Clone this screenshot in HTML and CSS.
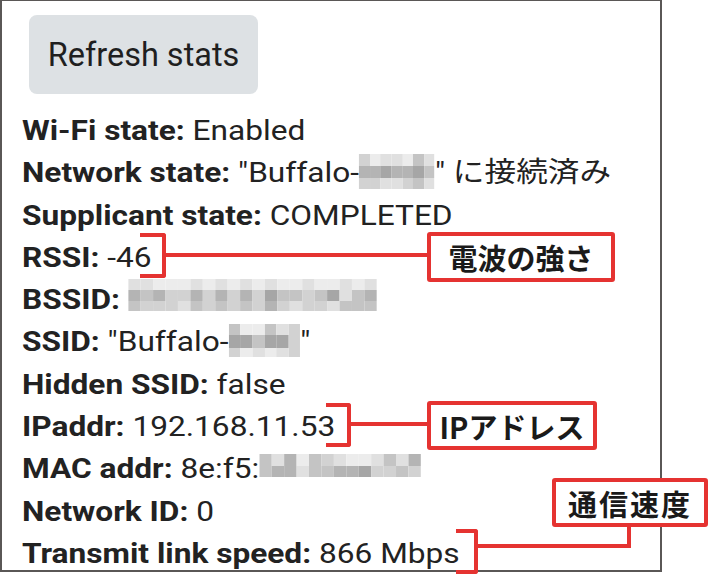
FILE: index.html
```html
<!DOCTYPE html>
<html lang="ja">
<head>
<meta charset="utf-8">
<title>Wi-Fi stats</title>
<link rel="stylesheet" href="styles.css">
</head>
<body>
<div class="page">
  <div class="frame">
    <button class="refresh">Refresh stats</button>
    <div class="stats">
      <div class="row"><b>Wi-Fi state:</b> Enabled</div>
      <div class="row"><b>Network state:</b> "Buffalo-<span class="mosaic m-net"><span class="cells"><i class="c"></i><i class="a"></i><i class="b"></i><i class="b"></i><i class="a"></i><i class="d"></i><i class="b"></i><i class="e"></i><i class="e"></i><i class="f"></i><i class="e"></i><i class="e"></i><i class="f"></i><i class="d"></i><i class="c"></i><i class="c"></i><i class="b"></i><i class="b"></i><i class="c"></i><i class="d"></i><i class="b"></i></span></span>" に接続済み</div>
      <div class="row"><b>Supplicant state:</b> COMPLETED</div>
      <div class="row"><b>RSSI:</b> -46</div>
      <div class="row"><b>BSSID:</b> <span class="mosaic m-bssid"><span class="cells"><i class="b"></i><i class="b"></i><i class="a"></i><i class="a"></i><i class="a"></i><i class="b"></i><i class="a"></i><i class="b"></i><i class="a"></i><i class="b"></i><i class="a"></i><i class="b"></i><i class="a"></i><i class="a"></i><i class="b"></i><i class="a"></i><i class="a"></i><i class="b"></i><i class="a"></i><i class="b"></i><i class="e"></i><i class="d"></i><i class="e"></i><i class="c"></i><i class="c"></i><i class="e"></i><i class="c"></i><i class="e"></i><i class="c"></i><i class="e"></i><i class="c"></i><i class="f"></i><i class="d"></i><i class="d"></i><i class="c"></i><i class="d"></i><i class="f"></i><i class="b"></i><i class="d"></i><i class="e"></i><i class="d"></i><i class="c"></i><i class="c"></i><i class="c"></i><i class="b"></i><i class="d"></i><i class="c"></i><i class="d"></i><i class="c"></i><i class="d"></i><i class="c"></i><i class="e"></i><i class="c"></i><i class="b"></i><i class="c"></i><i class="c"></i><i class="b"></i><i class="d"></i><i class="d"></i><i class="d"></i></span></span></div>
      <div class="row"><b>SSID:</b> "Buffalo-<span class="mosaic m-ssid"><span class="cells"><i class="d"></i><i class="a"></i><i class="a"></i><i class="d"></i><i class="b"></i><i class="c"></i><i class="f"></i><i class="f"></i><i class="d"></i><i class="f"></i><i class="f"></i><i class="c"></i><i class="c"></i><i class="a"></i><i class="b"></i><i class="a"></i><i class="b"></i><i class="c"></i></span></span>"</div>
      <div class="row"><b>Hidden SSID:</b> false</div>
      <div class="row"><b>IPaddr:</b> 192.168.11.53</div>
      <div class="row"><b>MAC addr:</b> 8e:f5:<span class="mosaic m-mac"><span class="cells"><i class="d"></i><i class="b"></i><i class="e"></i><i class="a"></i><i class="d"></i><i class="c"></i><i class="b"></i><i class="a"></i><i class="a"></i><i class="b"></i><i class="d"></i><i class="b"></i><i class="e"></i><i class="d"></i><i class="e"></i><i class="e"></i><i class="b"></i><i class="d"></i><i class="d"></i><i class="e"></i><i class="e"></i><i class="f"></i><i class="c"></i><i class="c"></i><i class="d"></i><i class="c"></i></span></span></div>
      <div class="row"><b>Network ID:</b> 0</div>
      <div class="row"><b>Transmit link speed:</b> 866 Mbps</div>
    </div>
  </div>

  <div class="bracket br-rssi"></div>
  <div class="hline ln-rssi"></div>
  <div class="label lb-rssi">電波の強さ</div>

  <div class="bracket br-ip"></div>
  <div class="hline ln-ip"></div>
  <div class="label lb-ip">IPアドレス</div>

  <div class="bracket br-speed"></div>
  <div class="hline ln-speed"></div>
  <div class="vline vl-speed"></div>
  <div class="label lb-speed">通信速度</div>
</div>
</body>
</html>
```

FILE: styles.css
```css
* { box-sizing: border-box; }

html, body {
  margin: 0;
  padding: 0;
  background: #ffffff;
}

.page {
  position: relative;
  width: 711px;
  height: 576px;
  overflow: hidden;
  font-family: Roboto, "Noto Sans CJK JP", sans-serif;
  color: #222222;
}

.frame {
  width: 662px;
  height: 572px;
  border: 2px solid #5a5756;
  border-top-width: 1px;
  padding: 14px 0 0 20px;
}

.refresh {
  display: block;
  margin: 0 0 0 7px;
  width: 229px;
  height: 79px;
  border: none;
  border-radius: 8px;
  background: #dde1e4;
  font-family: Roboto, sans-serif;
  font-size: 32.5px;
  color: #1f1f1f;
  padding: 0;
}

.stats {
  margin-top: 16px;
  transform: scaleX(1.13);
  transform-origin: 0 0;
}

.row {
  font-size: 28px;
  line-height: 42.3px;
  height: 42.3px;
  white-space: nowrap;
}

.row b {
  font-weight: 700;
}

.mosaic {
  display: inline-block;
  overflow: hidden;
  line-height: 0;
}

.cells {
  display: grid;
}

.cells i {
  display: block;
}

.m-net { vertical-align: -7px; }
.m-net .cells {
  grid-template-columns: repeat(7, 9.6px);
  grid-template-rows: repeat(3, 11.7px);
}

.m-bssid { vertical-align: -2px; }
.m-bssid .cells {
  grid-template-columns: repeat(20, 11px);
  grid-template-rows: repeat(3, 10.7px);
}

.m-ssid { vertical-align: -6px; }
.m-ssid .cells {
  grid-template-columns: repeat(6, 10.6px);
  grid-template-rows: 11px 13px 9px;
}

.m-mac { vertical-align: 1px; }
.m-mac .cells {
  grid-template-columns: repeat(13, 11px);
  grid-template-rows: repeat(2, 11.5px);
}

.cells .a { background: #ececec; }
.cells .b { background: #e0e0e0; }
.cells .c { background: #d2d2d2; }
.cells .d { background: #c4c4c4; }
.cells .e { background: #b4b4b4; }
.cells .f { background: #a6a6a6; }

/* annotations */
.bracket {
  position: absolute;
  border: 4px solid #e53331;
  border-left: none;
  border-radius: 0 3px 3px 0;
}

.hline {
  position: absolute;
  height: 4px;
  background: #e53331;
}

.vline {
  position: absolute;
  width: 4px;
  background: #e53331;
}

.label {
  position: absolute;
  border: 4px solid #e53331;
  border-radius: 3px;
  background: #ffffff;
  font-family: "Noto Sans CJK JP", sans-serif;
  font-weight: 700;
  color: #1a1a1a;
  font-size: 29px;
  display: flex;
  align-items: center;
  justify-content: center;
  white-space: nowrap;
}

.br-rssi { left: 140px; top: 233px; width: 26px; height: 45px; }
.ln-rssi { left: 165px; top: 253px; width: 263px; }
.lb-rssi { left: 427px; top: 232px; width: 188px; height: 50px; }

.br-ip { left: 326px; top: 403px; width: 25px; height: 44px; }
.ln-ip { left: 350px; top: 422px; width: 78px; }
.lb-ip { left: 427px; top: 401px; width: 170px; height: 49px; }

.br-speed { left: 456px; top: 529px; width: 22px; height: 45px; }
.ln-speed { left: 477px; top: 544px; width: 154px; }
.vl-speed { left: 627px; top: 525px; height: 23px; }
.lb-speed { left: 552px; top: 478px; width: 156px; height: 49px; letter-spacing: 2px; }
```
